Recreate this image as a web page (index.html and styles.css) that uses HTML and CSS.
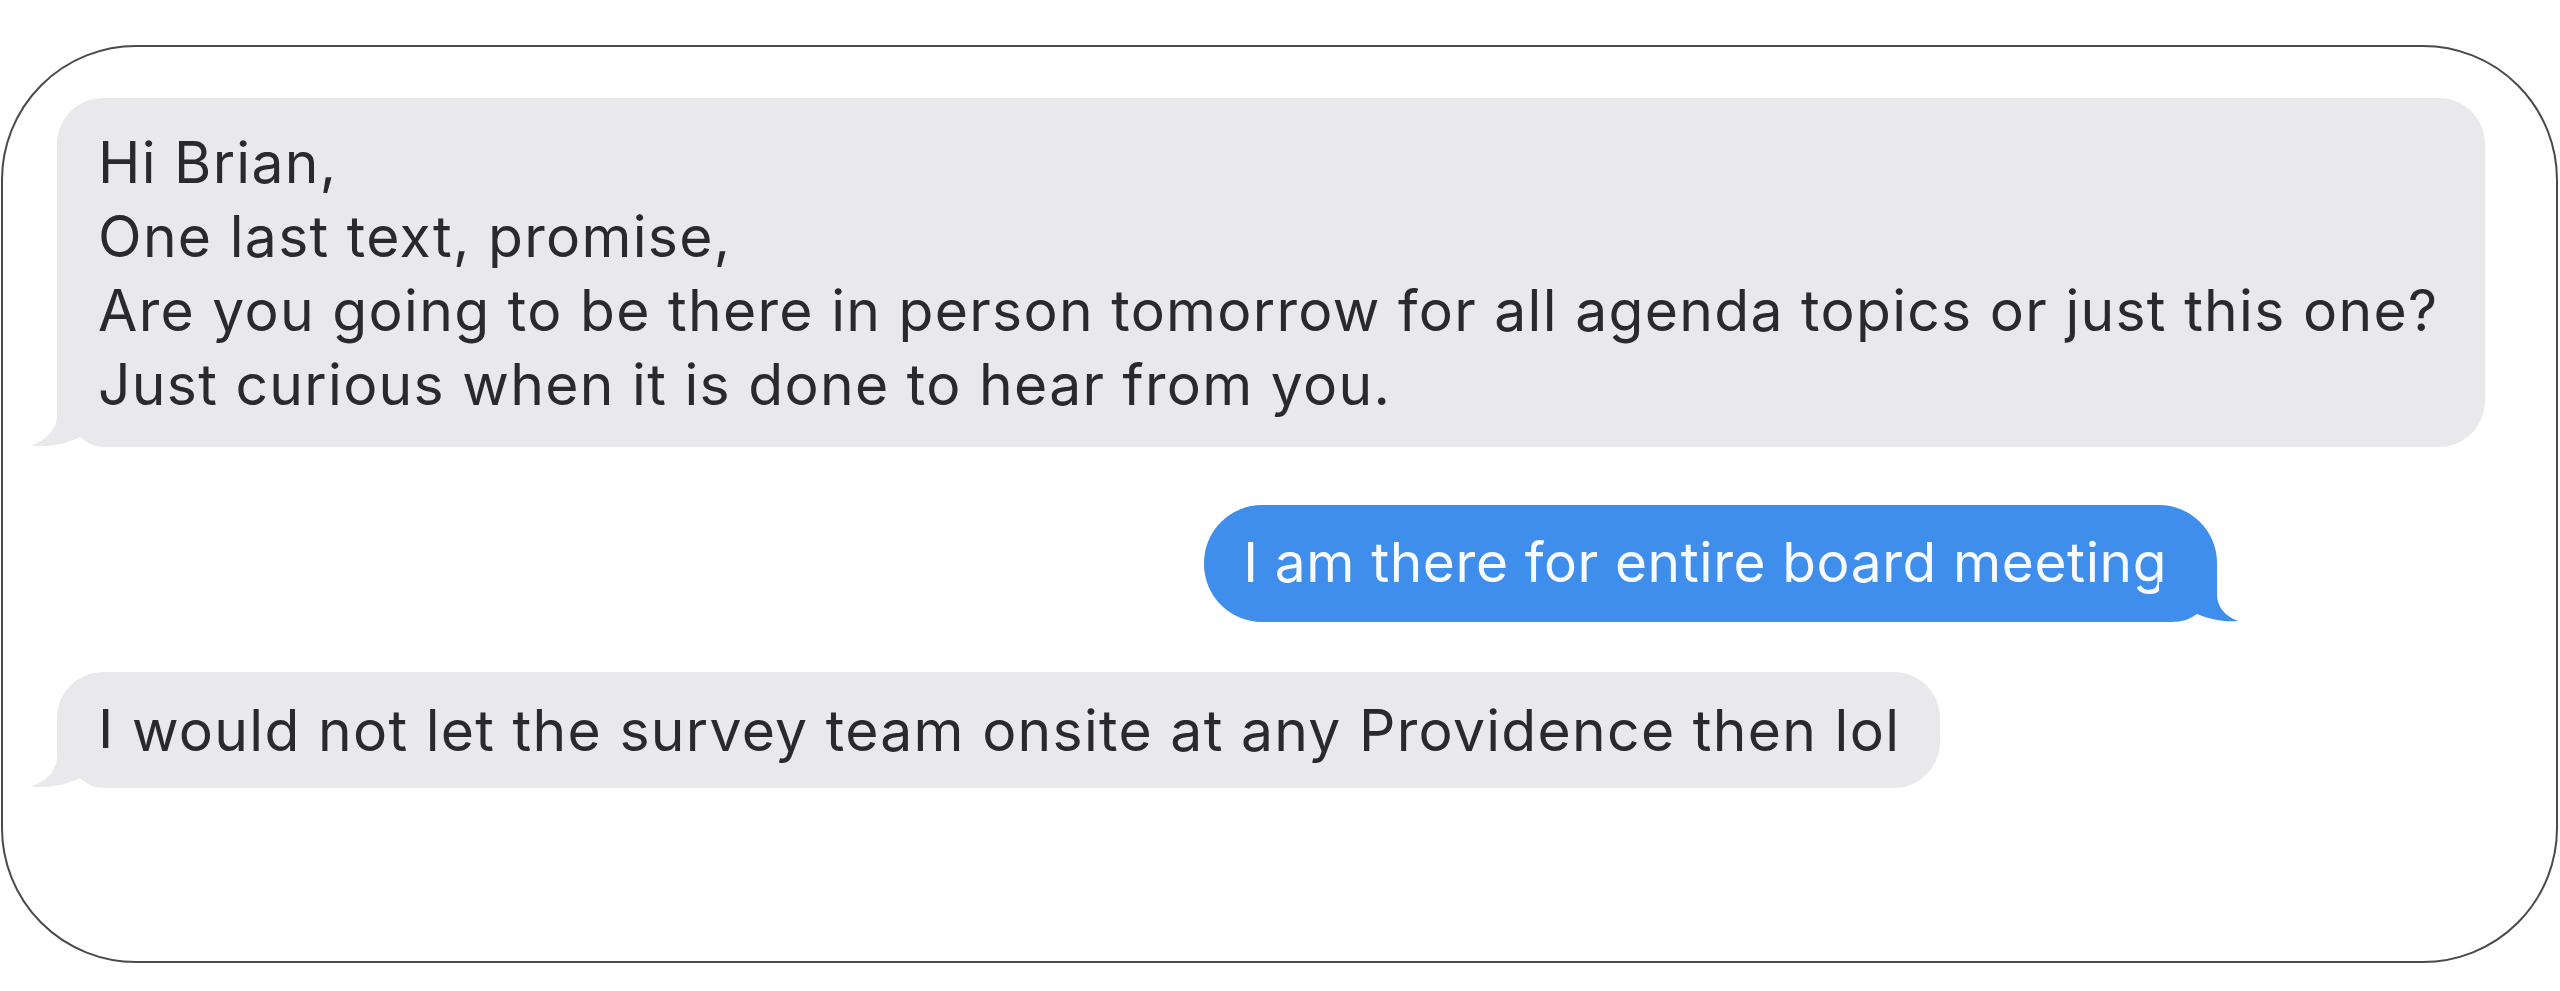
FILE: index.html
```
<!DOCTYPE html>
<html lang="en">
<head>
<meta charset="utf-8">
<title>Messages</title>
<link rel="stylesheet" href="styles.css">
</head>
<body>
<div class="frame">
  <div class="bubble them wide">
    <p class="line">Hi Brian,</p>
    <p class="line">One last text, promise,</p>
    <p class="line">Are you going to be there in person tomorrow for all agenda topics or just this one?</p>
    <p class="line">Just curious when it is done to hear from you.</p>
    <svg class="tail" viewBox="0 0 84 40" width="84" height="40" aria-hidden="true">
      <path class="tail-cut" d="M26 12 H82 V41 H26 Z"/>
      <path class="tail-fill" d="M26 0 L26 8 C26 23 15 33 0 38.5 C15 40.5 36 37 49 30 C56 36 62 40 74 40 L84 40 L84 0 Z"/>
    </svg>
  </div>
  <div class="bubble me">
    <p class="line">I am there for entire board meeting</p>
    <svg class="tail" viewBox="0 0 84 40" width="84" height="40" aria-hidden="true">
      <path class="tail-cut" d="M26 12 H82 V41 H26 Z"/>
      <path class="tail-fill" d="M26 0 L26 12 C26 25 18 34 5 39 C18 40.5 34 37 46 32 C53 37 60 40 72 40 L84 40 L84 0 Z"/>
    </svg>
  </div>
  <div class="bubble them">
    <p class="line">I would not let the survey team onsite at any Providence then lol</p>
    <svg class="tail" viewBox="0 0 84 40" width="84" height="40" aria-hidden="true">
      <path class="tail-cut" d="M26 12 H82 V41 H26 Z"/>
      <path class="tail-fill" d="M26 0 L26 8 C26 23 15 33 0 38.5 C15 40.5 36 37 49 30 C56 36 62 40 74 40 L84 40 L84 0 Z"/>
    </svg>
  </div>
</div>
</body>
</html>
```
FILE: styles.css
```
html, body {
  margin: 0;
  padding: 0;
  background: #ffffff;
}

body {
  font-family: "Inter", "Liberation Sans", Arial, sans-serif;
}

.frame {
  box-sizing: border-box;
  margin: 45px 0 0 1px;
  width: 2557px;
  height: 918px;
  border: 2px solid #4a4a4a;
  border-radius: 135px;
  padding: 51px 71px 0 54px;
  display: flex;
  flex-direction: column;
  align-items: flex-start;
}

.bubble {
  position: relative;
  box-sizing: border-box;
  border-radius: 46px;
  font-size: 57px;
  line-height: 74px;
  letter-spacing: 1.3px;
}

.line {
  margin: 0;
  white-space: nowrap;
}

.them {
  background: #e9e9eb;
  color: #2a2a2c;
  padding: 22px 40px 20px 41px;
  border-bottom-left-radius: 0;
}

.them.wide {
  align-self: stretch;
  padding: 28px 52px 25px 41px;
}

.me {
  align-self: flex-end;
  margin-top: 58px;
  margin-right: 268px;
  background: #3f8eec;
  color: #f7faff;
  font-size: 55px;
  line-height: 75px;
  letter-spacing: 0.6px;
  padding: 20px 50px 22px 39px;
  border-radius: 58px;
  border-bottom-right-radius: 0;
}

.me + .them {
  margin-top: 50px;
}

.tail {
  position: absolute;
  bottom: 0;
  overflow: visible;
  display: block;
}

.them .tail {
  left: -26px;
}

.me .tail {
  right: -26px;
  transform: scaleX(-1);
}

.tail-cut {
  fill: #ffffff;
}

.them .tail-fill {
  fill: #e9e9eb;
}

.me .tail-fill {
  fill: #3f8eec;
}
```
